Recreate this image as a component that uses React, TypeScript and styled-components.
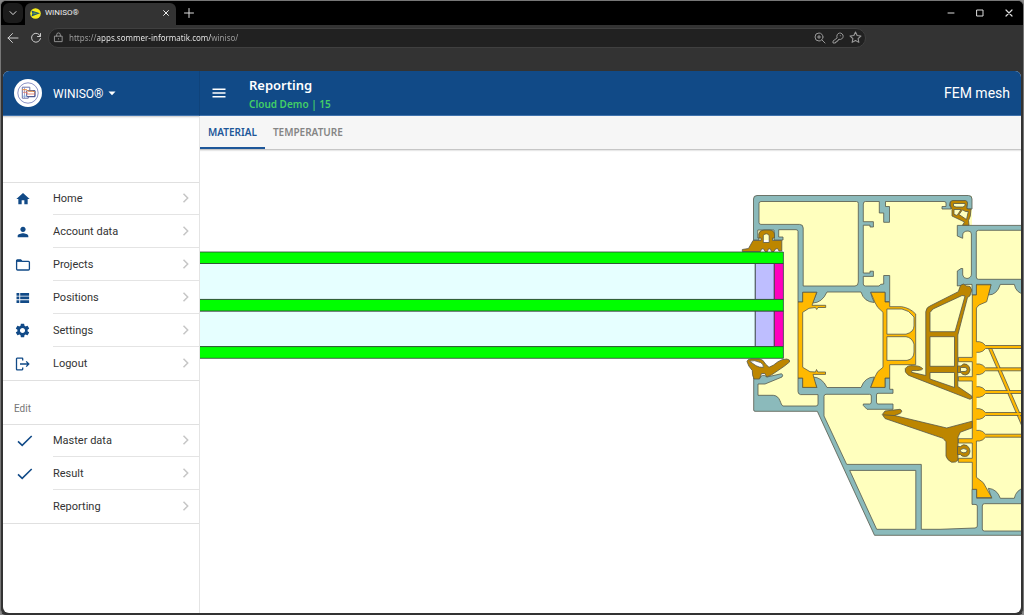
import React from "react";
import styled, { createGlobalStyle } from "styled-components";
import { MdHome, MdPerson, MdSettings } from "react-icons/md";

const blue = "#114a87";
const ui = `Roboto, "Liberation Sans", sans-serif`;
const system = `"Noto Sans", "Open Sans", sans-serif`;

const GlobalStyle = createGlobalStyle`
  * { box-sizing: border-box; }
  html, body, #root { height: 100%; }
  body { margin: 0; background: #8a8a8a; font-family: ${ui}; }
  button, input { font: inherit; border: 0; background: none; padding: 0; }
`;

const BrowserWindow = styled.div`
  display: flex;
  flex-direction: column;
  min-height: 100vh;
  border: 1px solid #777;
  border-bottom-color: #333;
  border-radius: 6px;
  background: #333;
  overflow: hidden;
`;

const TitleBar = styled.div`
  display: flex;
  align-items: stretch;
  height: 24px;
  padding: 2px 0 0 2px;
  background: #000;
  color: #ddd;
`;

const ChromeButton = styled.button<{ $w?: number; $filled?: boolean }>`
  display: flex;
  align-items: center;
  justify-content: center;
  width: ${(p) => p.$w ?? 20}px;
  height: 20px;
  border-radius: 6px;
  color: inherit;
  background: ${(p) => (p.$filled ? "#1c1c1c" : "none")};
`;

const BrowserTab = styled.div`
  display: flex;
  align-items: center;
  gap: 4px;
  width: 151px;
  margin-left: 2px;
  padding: 0 0 2px 5px;
  border-radius: 6px 6px 0 0;
  background: #333;
  color: #f0f0f0;
  font: 8px/12px ${ui};
`;

const TabTitle = styled.span`
  flex: 1;
`;

const WindowControls = styled.div`
  display: flex;
  margin-left: auto;
`;

const Toolbar = styled.div`
  display: flex;
  align-items: center;
  height: 25px;
  margin-bottom: 21px;
  color: #ccc;
`;

const AddressBar = styled.label`
  display: flex;
  align-items: center;
  gap: 5px;
  width: 80%;
  height: 20px;
  margin-left: 2px;
  padding: 0 2px 0 4px;
  border: 1px solid #404040;
  border-radius: 10px;
  background: #212121;
  color: #999;
`;

const AddressInput = styled.input`
  flex: 1;
  min-width: 0;
  font: 8px/14px ${system};
  color: #a2a2a2;
  background: linear-gradient(to right, #a2a2a2 28px, #f4f4f4 28px 142px, #a2a2a2 142px);
  -webkit-background-clip: text;
  background-clip: text;
  -webkit-text-fill-color: transparent;
  outline: 0;
`;

const AddressActions = styled.div`
  display: flex;
  gap: 4px;
  color: #999;
`;

const SmallButton = styled.button`
  display: flex;
  width: 14px;
  height: 14px;
  align-items: center;
  justify-content: center;
  color: inherit;
`;

const Page = styled.div`
  flex: 1;
  display: grid;
  grid-template-columns: 197px 1fr;
  grid-template-rows: 45px 1fr;
  margin: 0 2px 1px;
  border-radius: 6px;
  background: #fff;
  overflow: hidden;
`;

const Brand = styled.header`
  display: flex;
  align-items: center;
  gap: 11px;
  padding-left: 11px;
  background: ${blue};
  border-right: 1px solid #0f437b;
  border-bottom: 1px solid #3f72ac;
`;

const BrandMenu = styled.button`
  display: flex;
  align-items: center;
  gap: 4px;
  padding-top: 1px;
  color: #fff;
  font: 12px/16px ${ui};
`;

const AppBar = styled.header`
  display: flex;
  align-items: center;
  padding: 0 11px;
  background: ${blue};
  border-bottom: 1px solid #3f72ac;
  color: #fff;
`;

const MenuButton = styled.button`
  display: flex;
  width: 16px;
  height: 16px;
  align-items: center;
  justify-content: center;
  color: #fff;
`;

const Heading = styled.div`
  margin-left: 22px;
  padding-top: 2px;
  flex: 1;
`;

const Title = styled.h1`
  margin: 0;
  font: 600 13px/20px ${system};
`;

const Subtitle = styled.p`
  margin: 0;
  font: 600 10px/18px ${system};
  color: #43cf66;
`;

const MeshButton = styled.button`
  color: #fff;
  font: 14px/20px ${ui};
`;

const Sidebar = styled.nav`
  padding-top: 66px;
  border-right: 1px solid #e4e4e4;
  box-shadow: inset 0 3px 2px -2px #c8c8c8;
`;

const MenuList = styled.ul`
  margin: 0;
  padding: 0;
  list-style: none;
  border-bottom: 1px solid #e0e0e0;
`;

const MenuLink = styled.a`
  display: grid;
  grid-template-columns: 50px 1fr;
  height: 33px;
  color: #333;
  text-decoration: none;
  font: 11px/31px ${ui};

  li:first-child & { box-shadow: inset 0 1px #e0e0e0; }
`;

const IconCell = styled.span<{ $check?: boolean }>`
  display: flex;
  align-items: center;
  width: ${(p) => (p.$check ? 44 : 39)}px;
  justify-content: center;
  color: ${blue};
`;

const LabelCell = styled.span`
  display: flex;
  align-items: center;
  justify-content: space-between;
  padding-right: 10px;
  border-bottom: 1px solid #e4e4e4;

  li:last-child & { border-bottom-color: transparent; }
`;

const GroupLabel = styled.h2`
  margin: 0;
  padding: 20px 11px 7px;
  font: 10px/16px ${ui};
  color: #757575;
`;

const Content = styled.main`
  display: flex;
  flex-direction: column;
  min-width: 0;
`;

const TabStrip = styled.div`
  display: flex;
  height: 34px;
  background: #f6f6f6;
  border-bottom: 1px solid #c6c6c6;
  box-shadow: 0 1px 1px #e8e8e8;
`;

const TabButton = styled.button<{ $active?: boolean }>`
  padding: 1px 8px 0;
  height: 33px;
  border-bottom: 2px solid ${(p) => (p.$active ? "#1e5799" : "transparent")};
  color: ${(p) => (p.$active ? "#1e5799" : "#858585")};
  font: 600 10px/30px ${system};
`;

const Drawing = styled.svg`
  display: block;
  flex: 1 1 0px;
  width: 100%;
  min-height: 0;
  overflow: hidden;
`;

const Chevron = () => (
  <svg width="7" height="10" viewBox="0 0 7 10" fill="none" stroke="#c6c6c6" strokeWidth="1.5">
    <path d="M1.5 .8L5.7 5 1.5 9.2" />
  </svg>
);

const FolderIcon = () => (
  <svg width="16" height="14" viewBox="0 0 16 14" fill="none" stroke="currentColor" strokeWidth="1.3">
    <path d="M1.6 11V2.8q0-.8.8-.8h3.2l1.3 1.3h6.5q1 0 1 1V11q0 1-1 1H2.6q-1 0-1-1z" />
    <path d="M1.6 2.9h5" strokeWidth="2" />
  </svg>
);

const ListIcon = () => (
  <svg width="16" height="14" viewBox="0 0 16 14" fill="currentColor">
    <path d="M1.5 2h2.8v2.7H1.5zM5.2 2h8.9v2.7H5.2zM1.5 5.6h2.8v2.7H1.5zM5.2 5.6h8.9v2.7H5.2zM1.5 9.2h2.8v2.7H1.5zM5.2 9.2h8.9v2.7H5.2z" />
  </svg>
);

const LogoutIcon = () => (
  <svg width="16" height="14" viewBox="0 0 16 14" fill="none" stroke="currentColor" strokeWidth="1.3">
    <path d="M7.7 3.5V1.7q0-.5-.5-.5H2.1q-.6 0-.6.6v10.4q0 .6.6.6h5.1q.5 0 .5-.5v-1.8M5 7h8.8M11.2 4.4L13.8 7l-2.6 2.6" />
  </svg>
);

const CheckIcon = () => (
  <svg width="16" height="14" viewBox="0 0 16 14" fill="none" stroke="currentColor" strokeWidth="1.6">
    <path d="M1 7.3l4.2 4L14.7 2" />
  </svg>
);

const Logo = () => (
  <svg width="28" height="28" viewBox="0 0 28 28" fill="none">
    <circle cx="14" cy="14" r="14" fill="#fff" />
    <circle cx="14" cy="14" r="10.2" stroke="#7e86bd" strokeWidth=".9" />
    <path d="M8.3 8.2h7.5v3.6h5v5.9h-6.5v1.5h-6z" stroke="#6a73a8" strokeWidth="1" />
    <path d="M12.7 11.7h8.3v5.9h-8.3z" stroke="#4a5792" strokeWidth="1" />
    <path d="M10.5 8.5v10.5" stroke="#8b93c0" strokeWidth=".8" />
    <path d="M8.3 10.7h4.5l1.5 1.5h4.5l2.3 1" stroke="#ef8c35" strokeWidth="1" />
    <path d="M9 13.3h4v1.7h8" stroke="#e9735a" strokeWidth=".8" />
    <path d="M9 17.2h4" stroke="#7cb8e8" strokeWidth=".8" />
  </svg>
);

const Favicon = () => (
  <svg width="11" height="11" viewBox="0 0 11 11">
    <circle cx="5.5" cy="5.5" r="5.3" fill="#f5ec1c" />
    <path d="M1.4 2.5L10 5.2 1.4 8.6l1-3z" fill="#20507c" />
    <path d="M3.4 4.2l4 1.1-4 1.3z" fill="#66a63c" />
  </svg>
);

const Glyph = ({ d, size = 12, w = 1 }: { d: string; size?: number; w?: number }) => (
  <svg width={size} height={size} viewBox="0 0 12 12" fill="none" stroke="currentColor" strokeWidth={w}
    strokeLinecap="round" strokeLinejoin="round">
    <path d={d} />
  </svg>
);

const ribs = [347, 369.3, 392, 414, 435.7];

const Profile = () => (
  <Drawing viewBox="200 150 821 480" preserveAspectRatio="xMinYMin slice" role="img" aria-label="Frame section">
    <g stroke="#55584a" strokeWidth=".8" strokeLinejoin="round">
      {/* air cavities behind the profiles */}
      <path stroke="none" fill="#ffffbe"
        d="M757 196H972V226H1024V535H875L817.5 411H754V384L784 358V250H781V240H754V199z" />

      {/* outer frame, thermal zone and right-hand sash */}
      <g fill="#8bbabb">
        <path d="M753.5 240V199Q753.5 195.5 757 195.5H968.5Q972 195.5 972 199V209H967V203.5Q967 201.5 965 201.5H952Q949.5 201.5 949.5 204V206H951V209H942V206.5H946V203Q946 201.5 944 201.5H885.5V206.5H889.5V222.3H883.7V213H879.3V201.5H865.5Q863.3 201.5 863.3 204V221.7H873.4V227H870V225.2H863.3V273H870V271.2H873.4V276.4H863.3V284Q863.3 286 865.5 286H879Q880 283.7 883.7 284V275.5H889.7V301.5H885V292.3H870.7Q872 298 874.3 302.5Q864 302 861 292H827Q822 303 812.5 303L817 292.3H802.7V302H798V231.5Q798 229.7 796 229.7H778.7V237H783V240H774V230H757.8V238H759V240z" />
        <path d="M798 378H802.7V387.5H817L812.5 377Q822 377 827 387.5H861Q865 377 874.3 377L870.7 387.5H885V378H889.7V389.3H893V393.3H878Q876.5 393.3 876.5 395V402Q876.5 404 878 404H893V409.3H867L863.3 405.5V404H869.5Q871.3 404 871.3 402V396Q871.3 394.3 869.5 394.3H826Q824 394.3 824 396.5V416L846.7 464.4H921.3V529.3H940L975 528Q977.3 527.7 977.3 526V506Q977.3 504.4 975 504.4H972V489.3H976.7V498.3H991.7L988.3 488.3Q997 489 1000.3 498.3H1014.3Q1016 490 1024 488V503.7H984.5Q982.3 503.7 982.3 506V529Q982.3 531 984.5 531H1024V535.3H874.5L817.3 411.3H755Q753.7 411.3 753.7 410V378H760Q762 373 767 377L781.5 373.7Q783.6 375 782 377L765 384H758V395.3H773.3C781 396 780 405 783 406H816Q818 406 818 404V394.6H800.5Q798 394 798 391.5z" />
        <path d="M957.3 225.4H1024V230.3H978.5Q976.3 230.3 976.3 232.5V277Q976.3 279.3 978.5 279.3H1024V294Q1016 293 1014.3 284.4H1000.3Q997 295 988.3 295L991 284.4H976.5V295H972V284.4H967L957.3 286V271L961 268.5H962.7V275Q963.5 278.5 967 278.5Q971.4 278 971.4 274V234Q971.4 231 968 231Q963 231 962.7 235V238.3L957.3 236z" />
      </g>
      <g fill="#ffffbe">
        <path d="M759 203.5Q759 201.5 761 201.5H856.5Q858.3 201.5 858.3 203.5V282Q858.3 286 855 286H803.2V228Q803.2 224.4 799.5 224.4H761Q759 224.4 759 222.5z" />
        <path d="M849.7 470.4H915.8V529.3H876.7z" />
      </g>

      {/* thermal breaks */}
      <g fill="#ffb900">
        <path d="M802.7 292.3H816.7L812 305.3H825.7V307.5H818L816.7 309.5 815.4 307.5 809 308.3 802.7 312.3V367.3L810 371.7 815.5 372 816.5 369.5 817.8 372H825.5V374.4H813L816.7 387.4H802.7V378H798V302H802.7z" />
        <path fillRule="evenodd" d="M870.7 292.3H885V302H889.7V306.7H901.7Q910 308 915.7 314V364.7H889.7V378H885V387.4H870.7L875 376.7 877.7 371.7 883 367.3V312.3L877.7 307.3 875 302.5zM886.9 309V334.2H906Q914 332 914 326V317Q909 310 902 309zM886.9 336.7V360.4H907Q914 359 914 352V344Q912 337.5 906 336.7z" />
        <path stroke="none" d="M976.4 341.5V441.2H974V341.5z" />
        <path d="M988.5 348.5H991.8L1024 423V431z" />
        {ribs.map((y) => (
          <path key={y} d={`M974 ${y - 5.3}H979.5Q983 ${y - 4.8} 985.5 ${y - 1.5}H1024V${y + 1.5}H985.5Q983 ${y + 4.8} 979.5 ${y + 5.3}H974`} />
        ))}
        <path stroke="none" d="M990.2 349.4H991.2L1024 425V428.5z" />
        <path d="M976.4 341.7V308L979 305 986.7 301.7 991 284.8H976.4V295H972.3V357.4H958.3V361.7H972.3V376.7H958.3V381H972.3V438.7H958.3V443H972.3V458.3H958.3V462.3H972.3V489.3H976.7V497.5H991.7L983.3 482.7 976.4 477.3V441" />
      </g>

      {/* gaskets */}
      <g fill="#bd8600">
        <path fillRule="evenodd" d="M742.3 251.5V249.5L748.5 248.5 753 240.5H761V238H758.8V234Q759.5 230 764 230H770Q774.5 230.5 774.5 235V238H772.5V240.5H781.8V251H779L777.5 248.5 775.5 249 774 251.5H771.5L770.3 248.8 768.3 249 767.5 251.5H765L763.5 248.8 761.5 249 760.5 251.5zM763.3 235.5V242.5H769.2V235.5Q766.3 232 763.3 235.5z" />
        <path fillRule="evenodd" d="M747 361.5Q747.5 359 751 359H759.5Q763 359 765.5 364L769 367.3Q773 366 778 361.7 782 359 786.7 359 790.5 359.5 789.5 362 785 366 778 370.5L771.7 374.8 766.7 377 764.8 373.5H761.5L759.5 379H754Q752 375 752.3 370.5 748 366 747 361.5zM749.5 361.2L756 365.7Q759 367.5 763.3 367.5 764 364 760.5 362.5 754 359.5 749.5 361.2z" />
        <path fillRule="evenodd" d="M963.3 284Q966 286.5 970 286.5L971.8 290 969.8 296 967.5 297.5 957.8 335V386.5L971.5 395.8Q973.5 398.5 970 399.3L908.3 375.2Q904 372 905.3 368.5 908 365 913 365.7 920 365.5 922.8 368.8 921.5 371 912 370.5L911.5 372.3 925.8 375.5V311.7Q926.5 307 930 306L958.3 291.7 960.5 285.5zM930 331.7H955L965 296 962 295.5 933 309 930 312.5zM930 336.7V366.3H954.5V336.7zM930 372.5V379L954.5 387.5V372.5z" />
        <path fillRule="evenodd" d="M957.5 366H961Q963.5 362.5 967 364.5 970 366.5 970 370 969.5 374.5 965.5 375 962 375 961 372.5H957.5zM960.5 367.5V371.5H965Q967 371 967 369.5 967 367.5 965 367.5z" />
        <path d="M882.3 414.5L885 411 900 409.3Q903.5 411 900 413.5L894.5 415.5 946.7 428 972.2 421.2V427.8L960.3 432.2 958 437V460Q956 463 951.5 462.2 947 460 946 456V441.7L943 438.3 885 418.5z" />
        <path fillRule="evenodd" d="M957.5 446.5H960.5Q963 443.5 967 445.5 970 448 970 451 969.5 456 965.5 456.5 961 456.5 960.5 454.5H957.5zM960.3 450.7Q961 448.6 963.8 448.6 967 449 967 450.7 967 452.8 963.8 452.8 961 452.8 960.3 450.7z" />
        <path d="M883 414.8L894.5 415.6" fill="none" />
        <path fillRule="evenodd" d="M950.5 202Q951 200.5 953 200.5H965.5Q967.7 201 967.5 203.5L966.5 207.5 967.5 209H971L970.3 216 968.5 220.5 969 225.2H962.5L964.5 222 952 216V209.5L950.5 206zM953.5 203.5V206L956 207H963L965 205.5V203.5zM954 209.5V214.3L957 215.5 961 209.5zM959 214.5L966.5 219.5 968.3 211.5H965.5L962.5 209.8z" />
      </g>

      {/* triple glazing */}
      <g stroke="#33403a">
        <path d="M199 263.5H755.3V299.5H199zM199 311H755.3V346.5H199z" fill="#e6ffff" />
        <path d="M755.3 263.5H774.3V299.5H755.3zM755.3 311H774.3V346.5H755.3z" fill="#bebeff" />
        <path d="M774.3 263.5H783.4V299.5H774.3zM774.3 311H783.4V346.5H774.3z" fill="#ff00be" />
        <path d="M199 252H783.4V263.5H199zM199 299.4H783.4V311H199zM199 346.6H783.4V358.3H199z" fill="#00ff00" />
      </g>
    </g>
  </Drawing>
);

const mainItems = [
  { label: "Home", icon: <MdHome size={16} /> },
  { label: "Account data", icon: <MdPerson size={16} /> },
  { label: "Projects", icon: <FolderIcon /> },
  { label: "Positions", icon: <ListIcon /> },
  { label: "Settings", icon: <MdSettings size={17} /> },
  { label: "Logout", icon: <LogoutIcon /> },
];

const editItems = [
  { label: "Master data", icon: <CheckIcon /> },
  { label: "Result", icon: <CheckIcon /> },
  { label: "Reporting", icon: null },
];

const Menu = ({ items, check }: { items: { label: string; icon: React.ReactNode }[]; check?: boolean }) => (
  <MenuList>
    {items.map((item) => (
      <li key={item.label}>
        <MenuLink href="#">
          <IconCell $check={check}>{item.icon}</IconCell>
          <LabelCell>
            {item.label}
            <Chevron />
          </LabelCell>
        </MenuLink>
      </li>
    ))}
  </MenuList>
);

export default function App() {
  return (
    <>
      <GlobalStyle />
      <BrowserWindow>
        <TitleBar>
          <ChromeButton $filled aria-label="Tab search"><Glyph d="M3 4.6L6 7.6 9 4.6" /></ChromeButton>
          <BrowserTab>
            <Favicon />
            <TabTitle>WINISO®</TabTitle>
            <ChromeButton aria-label="Close tab"><Glyph d="M3.6 3.6l4.8 4.8M8.4 3.6L3.6 8.4" /></ChromeButton>
          </BrowserTab>
          <ChromeButton $w={26} aria-label="New tab"><Glyph d="M6 1.5v9M1.5 6h9" /></ChromeButton>
          <WindowControls>
            <ChromeButton $w={29} aria-label="Minimize"><Glyph d="M3 6h6" /></ChromeButton>
            <ChromeButton $w={29} aria-label="Maximize"><Glyph d="M3 3h6v6H3z" /></ChromeButton>
            <ChromeButton $w={29} aria-label="Close"><Glyph d="M3 3l6 6M9 3L3 9" w={1.2} /></ChromeButton>
          </WindowControls>
        </TitleBar>
        <Toolbar>
          <ChromeButton $w={24} aria-label="Back"><Glyph d="M5.5 1.5L1 6l4.5 4.5M1 6h10" /></ChromeButton>
          <ChromeButton $w={21} aria-label="Reload"><Glyph d="M10.3 4.2A4.5 4.5 0 1 0 10.5 6.5M10.5 1.5v3h-3" /></ChromeButton>
          <AddressBar>
            <Glyph size={11} d="M2 4.5h8v6H2zM4 4.5V3a2 2 0 0 1 4 0v1.5M6 7.3v.4" />
            <AddressInput aria-label="Address" defaultValue="https://apps.sommer-informatik.com/winiso/" />
            <AddressActions>
              <SmallButton aria-label="Zoom"><Glyph size={12} d="M9 5a4 4 0 1 1-8 0 4 4 0 0 1 8 0M8 8l3 3M5 3.5v3M3.5 5h3" /></SmallButton>
              <SmallButton aria-label="Passwords"><Glyph size={12} d="M5 5.5A3.2 3.2 0 1 1 7 7.3L6 8v1H4.8v1H3.5v1H1V9.5zM8.3 3.7v.1" /></SmallButton>
              <SmallButton aria-label="Favorite"><Glyph size={13} d="M6 1l1.5 3.2 3.5.4-2.6 2.4.7 3.5L6 8.8 2.9 10.5l.7-3.5L1 4.6l3.5-.4z" /></SmallButton>
            </AddressActions>
          </AddressBar>
        </Toolbar>
        <Page>
          <Brand>
            <Logo />
            <BrandMenu>
              WINISO®
              <svg width="8" height="5" viewBox="0 0 8 5"><path d="M.5.5h7L4 4.3z" fill="#fff" /></svg>
            </BrandMenu>
          </Brand>
          <AppBar>
            <MenuButton aria-label="Toggle menu">
              <svg width="14" height="10" viewBox="0 0 14 10"><path d="M.5 1.2h13M.5 5h13M.5 8.8h13" stroke="#fff" strokeWidth="1.5" /></svg>
            </MenuButton>
            <Heading>
              <Title>Reporting</Title>
              <Subtitle>Cloud Demo | 15</Subtitle>
            </Heading>
            <MeshButton>FEM mesh</MeshButton>
          </AppBar>
          <Sidebar>
            <Menu items={mainItems} />
            <GroupLabel>Edit</GroupLabel>
            <Menu items={editItems} check />
          </Sidebar>
          <Content>
            <TabStrip role="tablist">
              <TabButton role="tab" aria-selected $active>MATERIAL</TabButton>
              <TabButton role="tab" aria-selected={false}>TEMPERATURE</TabButton>
            </TabStrip>
            <Profile />
          </Content>
        </Page>
      </BrowserWindow>
    </>
  );
}
